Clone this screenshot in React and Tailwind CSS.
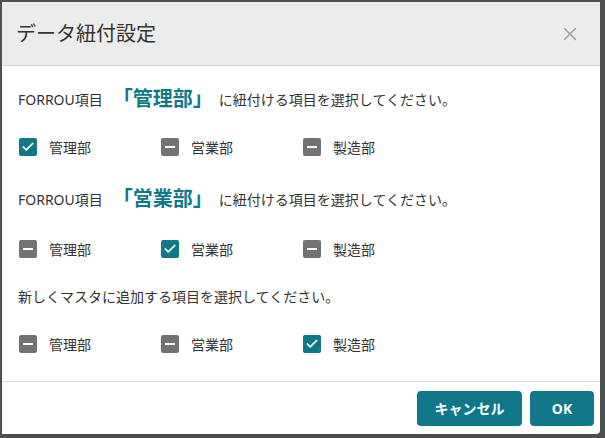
import React, { useState } from "react";
import { X, Check } from "lucide-react";

const DEPTS = ["管理部", "営業部", "製造部"];

// which dept is ticked per section
const sections = [
  { target: "管理部", checked: 0, textGap: "", rowGap: "mt-[22px]" },
  { target: "営業部", checked: 1, textGap: "mt-[26px]", rowGap: "mt-[24px]" },
  { target: null, checked: 2, textGap: "mt-[21px]", rowGap: "mt-[22px]" },
];

const Box = ({ on }) =>
  on ? (
    <span className="w-[18px] h-[18px] rounded-[2px] bg-[#117889] flex items-center justify-center">
      <Check size={14} strokeWidth={3} color="#fff" />
    </span>
  ) : (
    <span className="w-[18px] h-[18px] rounded-[2px] bg-[#727272] flex items-center justify-center">
      <span className="w-[10px] h-[2px] bg-white" />
    </span>
  );

const App = () => {
  const [checks, setChecks] = useState(sections.map((s) => s.checked));

  return (
    <div className="w-[605px] h-[438px] bg-[#4f4f4f] pl-[2px] pt-[2px] overflow-hidden font-['Noto_Sans','Noto_Sans_CJK_JP',sans-serif] text-[#333]">
      <div className="w-[598px] h-[432px] bg-white rounded-br-[4px] flex flex-col">
        <header className="h-[64px] bg-[#ececec] border-b border-[#d6d6d6] flex items-center justify-between pl-[14px] pr-[19px]">
          <h1 className="text-[20px] text-[#333] font-normal">データ紐付設定</h1>
          <X size={22} strokeWidth={1.5} color="#9a9a9a" />
        </header>

        <div className="flex-1 px-[16px] pt-[19px] border-b border-[#dcdcdc]">
          {sections.map((s, i) => (
            <div key={i} className={s.textGap}>
              <div className="h-[28px] flex items-center text-[14px]">
                {s.target ? (
                  <>
                    <span>FORROU項目</span>
                    <span className="ml-[10px] mr-[6px] text-[20px] font-bold text-[#117889]">
                      「{s.target}」
                    </span>
                    <span>に紐付ける項目を選択してください。</span>
                  </>
                ) : (
                  <span>新しくマスタに追加する項目を選択してください。</span>
                )}
              </div>
              <div className={`${s.rowGap} h-[24px] flex items-center pl-[1px]`}>
                {DEPTS.map((d, j) => (
                  <label
                    key={d}
                    className="w-[142px] flex items-center gap-[12px] text-[14px] cursor-pointer"
                    onClick={() =>
                      setChecks((c) => c.map((v, k) => (k === i ? j : v)))
                    }
                  >
                    <Box on={checks[i] === j} />
                    <span>{d}</span>
                  </label>
                ))}
              </div>
            </div>
          ))}
        </div>

        <footer className="h-[52px] flex items-start justify-end gap-[8px] pt-[9px] pr-[6px]">
          <button className="w-[105px] h-[35px] rounded-[4px] bg-[#117889] text-white text-[14px] font-bold">
            キャンセル
          </button>
          <button className="w-[64px] h-[35px] rounded-[4px] bg-[#117889] text-white text-[14px] font-bold">
            OK
          </button>
        </footer>
      </div>
    </div>
  );
};

export default App;
